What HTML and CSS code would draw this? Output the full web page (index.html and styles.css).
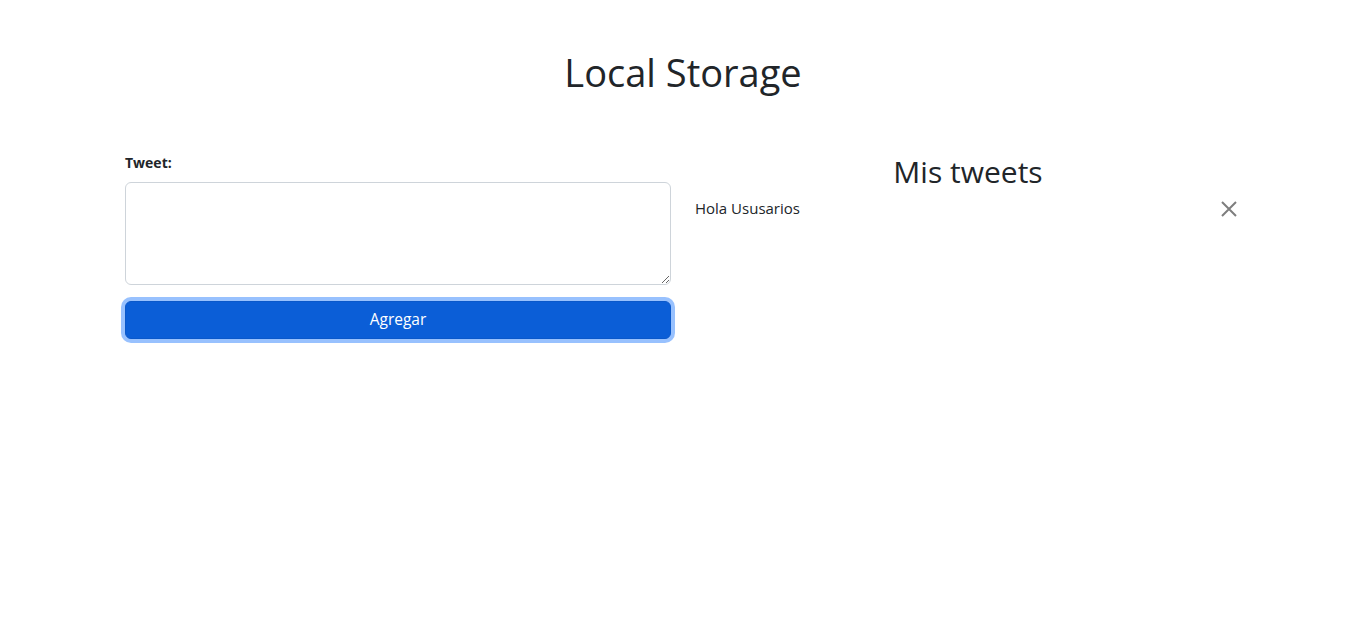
FILE: index.html
```html
<!DOCTYPE html>
<html lang="es">
<head>
<meta charset="utf-8">
<title>Local Storage</title>
<link rel="stylesheet" href="styles.css">
</head>
<body>
<div class="container">
  <h1 class="title">Local Storage</h1>
  <div class="row">
    <div class="col">
      <form class="tweet-form">
        <label class="form-label" for="tweet">Tweet:</label>
        <textarea class="form-control" id="tweet"></textarea>
        <button type="button" class="btn btn-primary">Agregar</button>
      </form>
    </div>
    <div class="col col-list">
      <h2 class="subtitle">Mis tweets</h2>
      <ul class="tweet-list">
        <li class="tweet-item">
          <span class="tweet-text">Hola Ususarios</span>
          <button type="button" class="btn-close" aria-label="Borrar">
            <svg viewBox="0 0 16 16" width="16" height="16"><path d="M1 1L15 15M15 1L1 15" stroke="#000" stroke-width="2" fill="none"/></svg>
          </button>
        </li>
      </ul>
    </div>
  </div>
</div>
</body>
</html>
```

FILE: styles.css
```css
* { box-sizing: border-box; }
html, body { margin: 0; padding: 0; background: #fff; }
body {
  font-family: "Open Sans", "Noto Sans", "Liberation Sans", sans-serif;
  font-size: 16px;
  line-height: 1.5;
  color: #212529;
}
.container {
  width: 1140px;
  margin: 0 auto;
  padding: 0 12px;
}
.title {
  margin: 50px 0 0;
  text-align: center;
  font-weight: 400;
  font-size: 38px;
  line-height: 1.2;
}
.row {
  display: flex;
  gap: 24px;
  margin-top: 49px;
}
.col { flex: 1 1 0; min-width: 0; }
.tweet-form {
  display: flex;
  flex-direction: column;
  padding-top: 7px;
  padding-bottom: 8px;
}
.form-label {
  font-weight: 700;
  font-size: 14px;
  line-height: 21px;
  margin-bottom: 9px;
}
.form-control {
  display: block;
  width: 100%;
  height: 103px;
  padding: 6px 12px;
  font: inherit;
  color: #212529;
  border: 1px solid #ced4da;
  border-radius: 6px;
  background: #fff;
  resize: vertical;
}
.btn {
  margin-top: 16px;
  height: 38px;
  width: 100%;
  font: inherit;
  font-size: 15.5px;
  color: #fff;
  background: #0b5ed7;
  border: 1px solid #0a58ca;
  border-radius: 6px;
  box-shadow: 0 0 0 4px rgba(49, 132, 253, 0.5);
  cursor: pointer;
}
.col-list { padding-top: 7px; }
.subtitle {
  margin: 0;
  text-align: center;
  font-weight: 400;
  font-size: 30px;
  line-height: 40px;
}
.tweet-list { list-style: none; margin: 5px 0 0; padding: 0; }
.tweet-item {
  display: flex;
  justify-content: space-between;
  align-items: center;
  font-size: 15px;
}
.btn-close {
  width: 24px;
  height: 24px;
  padding: 4px;
  border: 0;
  background: transparent;
  opacity: 0.5;
  display: flex;
  align-items: center;
  justify-content: center;
  cursor: pointer;
}
.btn-close svg { display: block; }
```
